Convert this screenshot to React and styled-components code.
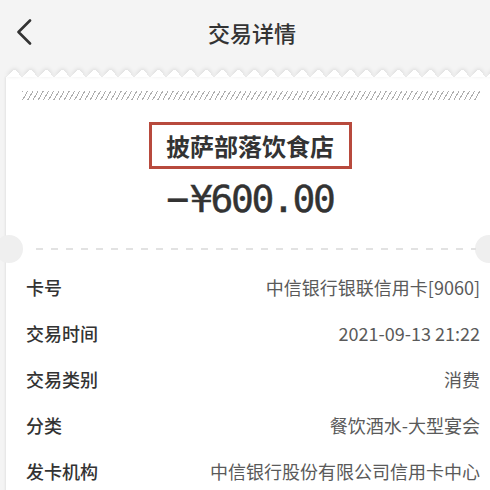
import styled, { createGlobalStyle } from "styled-components";

const Global = createGlobalStyle`
  html, body {
    margin: 0;
    padding: 0;
    background: #f4f4f4;
  }
  body {
    font-family: "Noto Sans CJK SC", "Noto Sans", sans-serif;
    color: #333;
  }
`;

const Page = styled.div`
  width: 490px;
  height: 490px;
  overflow: hidden;
  background: #f4f4f4;
`;

const Header = styled.header`
  display: grid;
  grid-template-columns: 50px 1fr 50px;
  align-items: center;
  height: 64px;
  padding-left: 14px;
  box-sizing: border-box;
`;

const Back = styled.button`
  display: flex;
  align-items: center;
  justify-content: flex-start;
  margin-left: -14px;
  padding: 0 0 0 16px;
  height: 40px;
  border: 0;
  background: none;
`;

const Title = styled.h1`
  margin: 0;
  text-align: center;
  font-size: 22px;
  font-weight: 500;
  color: #333;
`;

const Card = styled.section`
  margin: 13px -10px 0 6px;
  padding: 14px 0 20px;
  background: #fff;
  box-shadow: -1px 0 2px rgba(0, 0, 0, 0.07);
  position: relative;

  &::before {
    content: "";
    position: absolute;
    left: 0;
    right: 0;
    top: -8px;
    height: 8px;
    background: conic-gradient(from 135deg at 50% 0, #fff 90deg, transparent 0) 0 0 / 16px 100%;
    filter: drop-shadow(0 -1px 2px rgba(0, 0, 0, 0.12));
  }
`;

const Hatch = styled.div`
  margin: 0 20px 0 16px;
  height: 9px;
  background: repeating-linear-gradient(120deg, #a0a0a0 0 1px, transparent 1px 4.5px);
  opacity: 0.85;
`;

const Merchant = styled.div`
  display: flex;
  flex-direction: column;
  align-items: center;
  padding-top: 22px;
`;

const NameBox = styled.div`
  width: 203px;
  height: 47px;
  box-sizing: border-box;
  border: 3px solid #b84a3d;
  display: flex;
  align-items: center;
  justify-content: center;
  font-size: 24px;
  font-weight: 700;
  color: #333;
  margin-left: -6px;
`;

const Amount = styled.div`
  margin-top: 10px;
  font-family: "DejaVu Sans Mono", monospace;
  font-size: 38px;
  line-height: 40px;
  letter-spacing: -2.4px;
  color: #333;
  margin-left: -6px;
  -webkit-text-stroke: 0.4px #333;
`;

const Minus = styled.span`
  margin-right: 3px;
`;

const Divider = styled.div`
  position: relative;
  margin-top: 29px;
  height: 2px;

  &::after {
    content: "";
    position: absolute;
    left: 30px;
    right: 24px;
    top: 0;
    height: 2px;
    background: repeating-linear-gradient(90deg, #e2e2e2 0 7px, transparent 7px 15px);
  }
`;

const Notch = styled.span`
  position: absolute;
  top: -13px;
  width: 28px;
  height: 28px;
  border-radius: 50%;
  background: #efefef;
  ${({ side }) => (side === "left" ? "left: -11px;" : "right: -3px;")}
`;

const Rows = styled.dl`
  margin: 14px 0 0;
  padding: 0 20px;
`;

const Row = styled.div`
  display: flex;
  align-items: center;
  justify-content: space-between;
  height: 46px;
`;

const Label = styled.dt`
  font-size: 18px;
  font-weight: 500;
  color: #333;
`;

const Value = styled.dd`
  margin: 0;
  font-size: 18px;
  color: #5a5a5a;
`;

const rows = [
  ["卡号", "中信银行银联信用卡[9060]"],
  ["交易时间", "2021-09-13 21:22"],
  ["交易类别", "消费"],
  ["分类", "餐饮酒水-大型宴会"],
  ["发卡机构", "中信银行股份有限公司信用卡中心"],
];

const App = () => {
  return (
    <Page>
      <Global />
      <Header>
        <Back aria-label="返回">
          <svg width="16" height="26" viewBox="0 0 16 26">
            <polyline
              points="14,1.5 2.5,13 14,24.5"
              fill="none"
              stroke="#333"
              strokeWidth="2.6"
              strokeLinecap="round"
              strokeLinejoin="round"
            />
          </svg>
        </Back>
        <Title>交易详情</Title>
        <span />
      </Header>

      <Card>
        <Hatch />
        <Merchant>
          <NameBox>披萨部落饮食店</NameBox>
          <Amount>
            <Minus>−</Minus>¥600.00
          </Amount>
        </Merchant>
        <Divider>
          <Notch side="left" />
          <Notch side="right" />
        </Divider>
        <Rows>
          {rows.map(([k, v]) => (
            <Row key={k}>
              <Label>{k}</Label>
              <Value>{v}</Value>
            </Row>
          ))}
        </Rows>
      </Card>
    </Page>
  );
};

export default App;
